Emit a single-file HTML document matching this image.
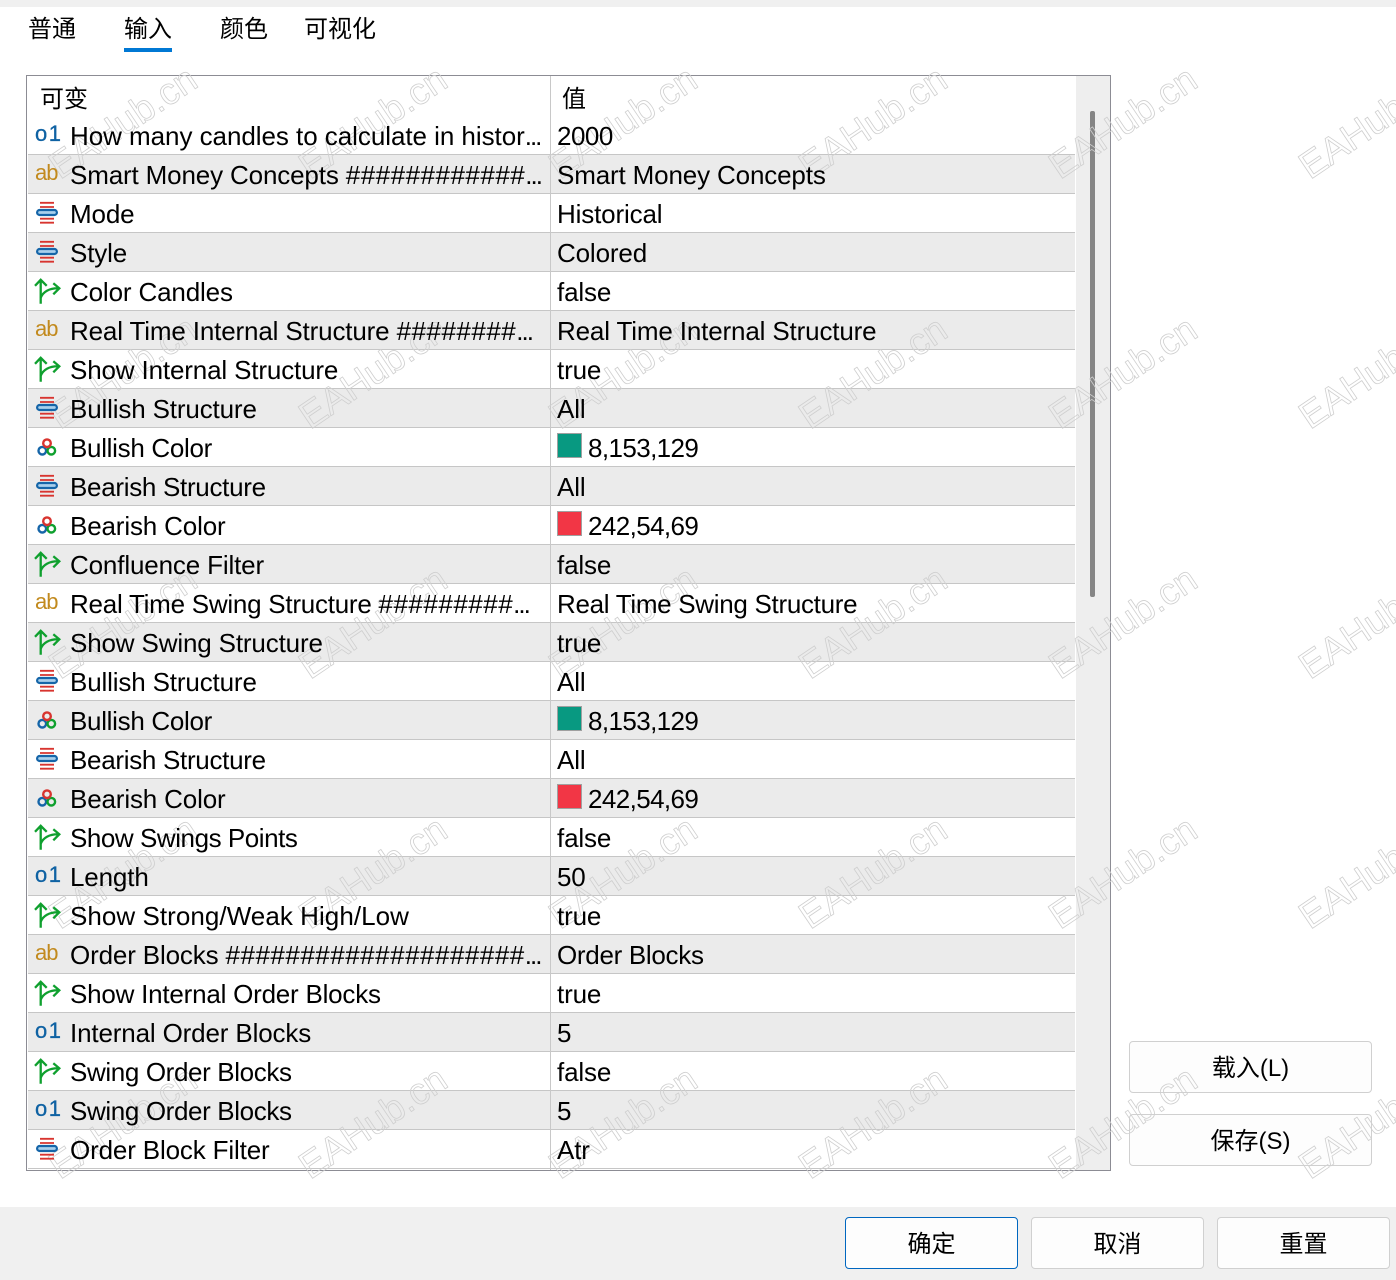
<!DOCTYPE html>
<html lang="zh"><head><meta charset="utf-8"><title>输入</title>
<style>
*{box-sizing:border-box}
html,body{margin:0;padding:0;width:1396px;height:1280px;overflow:hidden;background:#fff}
body{position:relative;font-family:"Liberation Sans","Noto Sans CJK SC",sans-serif;color:#000}
.abs{position:absolute}
.top{left:0;top:0;width:1396px;height:7px;background:#f0f0f0}
.bar{left:0;top:1207px;width:1396px;height:73px;background:#f0f0f0}
.tab{position:absolute;top:12px;font-size:24px;line-height:36px;white-space:nowrap}
.ul{left:124px;top:48px;width:48px;height:4px;background:#0078d4}
.box{left:26px;top:75px;width:1085px;height:1096px;border:1px solid #8c8c94;background:#fff;overflow:hidden}
.track{position:absolute;left:1049px;top:0;width:34px;height:1094px;background:#eee}
.thumb{position:absolute;left:1063px;top:35px;width:5px;height:486px;background:#858585;border-radius:2px}
.hd{position:absolute;top:4px;font-size:24px;line-height:40px}
.div{position:absolute;left:523px;top:0;width:1px;height:1094px;background:#c8c8c8;z-index:2}
.rows{position:absolute;left:1px;top:40px;width:1047px}
.r{position:relative;height:39px;border-bottom:1px solid #c6c6c6;font-size:26px;line-height:38px;white-space:nowrap}
.s{background:#ebebeb}
.n{position:absolute;left:42px;top:1px;letter-spacing:-.15px;z-index:6}
.v{position:absolute;left:529px;top:1px;letter-spacing:-.15px;z-index:6}
.v2{left:560px;letter-spacing:-.6px}
.d{letter-spacing:-2px}
.h{letter-spacing:.5px}
.i{position:absolute;left:6px;top:6px;width:28px;height:28px;z-index:6}
.t{position:absolute;left:7px;top:-1px;font-size:22px;line-height:38px;width:30px;z-index:6}
.o{color:#0f62a3;letter-spacing:1.5px;-webkit-text-stroke:.3px #0f62a3}
.a{color:#c28a1e;letter-spacing:-1px}
.sw{position:absolute;left:529px;top:5px;width:25px;height:25px;border:1px solid #a0a0a0;z-index:6}
.btn{position:absolute;height:52px;background:#fdfdfd;border:1px solid #d0d0d0;border-radius:4px;font-size:24px;line-height:53px;text-align:center}
.wm{position:absolute;left:0;top:0;z-index:5;pointer-events:none}
</style></head><body>
<div class="abs top"></div>
<div class="abs bar"></div>
<div class="tab" style="left:28px">普通</div>
<div class="tab" style="left:124px">输入</div>
<div class="tab" style="left:220px">颜色</div>
<div class="tab" style="left:304px">可视化</div>
<div class="abs ul"></div>
<svg width="0" height="0" style="position:absolute"><defs>
<g id="e"><path d="M6 2.8h14M6 7h14M6 18.7h14M6 22.7h14" stroke="#d8342f" stroke-width="1.8" fill="none"/><rect x="3.1" y="10" width="19.8" height="5" rx="2.5" fill="#a9d0ec" stroke="#1565a8" stroke-width="2.2"/></g>
<g id="b" fill="none" stroke="#0fa02e" stroke-width="2.3"><path d="M6.7 25.7V2M1 7.8l5.7-6 6 6"/><path d="M6.7 19.7C9 14 15 10 25 10.3M19.3 5.3l6 5-6 6"/></g>
<g id="c" fill="none" stroke-width="2.4"><circle cx="8.3" cy="16.7" r="3.8" stroke="#1565a8"/><circle cx="17.3" cy="16.7" r="3.8" stroke="#0fa02e"/><circle cx="13" cy="9.2" r="3.8" stroke="#d8342f"/></g>
</defs></svg>
<div class="abs box">
<div class="hd" style="left:13px">可变</div>
<div class="hd" style="left:535px">值</div>
<div class="rows">
<div class="r"><span class="t o">o1</span><span class="n" style="letter-spacing:-.05px">How many candles to calculate in histor<span class="d">...</span></span><span class="v" style="letter-spacing:-.5px">2000</span></div>
<div class="r s"><span class="t a">ab</span><span class="n">Smart Money Concepts <span class="h">############</span><span class="d">...</span></span><span class="v">Smart Money Concepts</span></div>
<div class="r"><svg class="i"><use href="#e"/></svg><span class="n">Mode</span><span class="v">Historical</span></div>
<div class="r s"><svg class="i"><use href="#e"/></svg><span class="n">Style</span><span class="v">Colored</span></div>
<div class="r"><svg class="i"><use href="#b"/></svg><span class="n">Color Candles</span><span class="v">false</span></div>
<div class="r s"><span class="t a">ab</span><span class="n">Real Time Internal Structure <span class="h">########</span><span class="d">...</span></span><span class="v">Real Time Internal Structure</span></div>
<div class="r"><svg class="i"><use href="#b"/></svg><span class="n">Show Internal Structure</span><span class="v">true</span></div>
<div class="r s"><svg class="i"><use href="#e"/></svg><span class="n">Bullish Structure</span><span class="v">All</span></div>
<div class="r"><svg class="i"><use href="#c"/></svg><span class="n" style="letter-spacing:-.3px">Bullish Color</span><span class="sw" style="background:#089981"></span><span class="v v2">8,153,129</span></div>
<div class="r s"><svg class="i"><use href="#e"/></svg><span class="n" style="letter-spacing:-.3px">Bearish Structure</span><span class="v">All</span></div>
<div class="r"><svg class="i"><use href="#c"/></svg><span class="n">Bearish Color</span><span class="sw" style="background:#f23645"></span><span class="v v2">242,54,69</span></div>
<div class="r s"><svg class="i"><use href="#b"/></svg><span class="n">Confluence Filter</span><span class="v">false</span></div>
<div class="r"><span class="t a">ab</span><span class="n" style="letter-spacing:-.25px">Real Time Swing Structure <span class="h">#########</span><span class="d">...</span></span><span class="v" style="letter-spacing:-.3px">Real Time Swing Structure</span></div>
<div class="r s"><svg class="i"><use href="#b"/></svg><span class="n">Show Swing Structure</span><span class="v">true</span></div>
<div class="r"><svg class="i"><use href="#e"/></svg><span class="n">Bullish Structure</span><span class="v">All</span></div>
<div class="r s"><svg class="i"><use href="#c"/></svg><span class="n" style="letter-spacing:-.3px">Bullish Color</span><span class="sw" style="background:#089981"></span><span class="v v2">8,153,129</span></div>
<div class="r"><svg class="i"><use href="#e"/></svg><span class="n" style="letter-spacing:-.3px">Bearish Structure</span><span class="v">All</span></div>
<div class="r s"><svg class="i"><use href="#c"/></svg><span class="n">Bearish Color</span><span class="sw" style="background:#f23645"></span><span class="v v2">242,54,69</span></div>
<div class="r"><svg class="i"><use href="#b"/></svg><span class="n" style="letter-spacing:-.45px">Show Swings Points</span><span class="v">false</span></div>
<div class="r s"><span class="t o">o1</span><span class="n">Length</span><span class="v">50</span></div>
<div class="r"><svg class="i"><use href="#b"/></svg><span class="n" style="letter-spacing:.05px">Show Strong/Weak High/Low</span><span class="v">true</span></div>
<div class="r s"><span class="t a">ab</span><span class="n">Order Blocks <span class="h">####################</span><span class="d">...</span></span><span class="v" style="letter-spacing:-.3px">Order Blocks</span></div>
<div class="r"><svg class="i"><use href="#b"/></svg><span class="n" style="letter-spacing:-.22px">Show Internal Order Blocks</span><span class="v">true</span></div>
<div class="r s"><span class="t o">o1</span><span class="n">Internal Order Blocks</span><span class="v">5</span></div>
<div class="r"><svg class="i"><use href="#b"/></svg><span class="n" style="letter-spacing:-.37px">Swing Order Blocks</span><span class="v">false</span></div>
<div class="r s"><span class="t o">o1</span><span class="n" style="letter-spacing:-.37px">Swing Order Blocks</span><span class="v">5</span></div>
<div class="r"><svg class="i"><use href="#e"/></svg><span class="n">Order Block Filter</span><span class="v">Atr</span></div>
</div>
<div class="div"></div>
<div class="track"></div><div class="thumb"></div>
</div>
<div class="btn" style="left:1129px;top:1041px;width:243px">载入(L)</div>
<div class="btn" style="left:1129px;top:1114px;width:243px">保存(S)</div>
<div class="btn" style="left:845px;top:1217px;width:173px;border-color:#0067c0">确定</div>
<div class="btn" style="left:1031px;top:1217px;width:173px">取消</div>
<div class="btn" style="left:1217px;top:1217px;width:173px">重置</div>
<svg class="wm" width="1396" height="1280" font-family="Liberation Sans" font-size="37.5" fill="none" stroke="#cfcfcf" stroke-width=".8">
<text transform="translate(60,180) rotate(-34)">EAHub.cn</text>
<text transform="translate(310,180) rotate(-34)">EAHub.cn</text>
<text transform="translate(560,180) rotate(-34)">EAHub.cn</text>
<text transform="translate(810,180) rotate(-34)">EAHub.cn</text>
<text transform="translate(1060,180) rotate(-34)">EAHub.cn</text>
<text transform="translate(1310,180) rotate(-34)">EAHub.cn</text>
<text transform="translate(60,430) rotate(-34)">EAHub.cn</text>
<text transform="translate(310,430) rotate(-34)">EAHub.cn</text>
<text transform="translate(560,430) rotate(-34)">EAHub.cn</text>
<text transform="translate(810,430) rotate(-34)">EAHub.cn</text>
<text transform="translate(1060,430) rotate(-34)">EAHub.cn</text>
<text transform="translate(1310,430) rotate(-34)">EAHub.cn</text>
<text transform="translate(60,680) rotate(-34)">EAHub.cn</text>
<text transform="translate(310,680) rotate(-34)">EAHub.cn</text>
<text transform="translate(560,680) rotate(-34)">EAHub.cn</text>
<text transform="translate(810,680) rotate(-34)">EAHub.cn</text>
<text transform="translate(1060,680) rotate(-34)">EAHub.cn</text>
<text transform="translate(1310,680) rotate(-34)">EAHub.cn</text>
<text transform="translate(60,930) rotate(-34)">EAHub.cn</text>
<text transform="translate(310,930) rotate(-34)">EAHub.cn</text>
<text transform="translate(560,930) rotate(-34)">EAHub.cn</text>
<text transform="translate(810,930) rotate(-34)">EAHub.cn</text>
<text transform="translate(1060,930) rotate(-34)">EAHub.cn</text>
<text transform="translate(1310,930) rotate(-34)">EAHub.cn</text>
<text transform="translate(60,1180) rotate(-34)">EAHub.cn</text>
<text transform="translate(310,1180) rotate(-34)">EAHub.cn</text>
<text transform="translate(560,1180) rotate(-34)">EAHub.cn</text>
<text transform="translate(810,1180) rotate(-34)">EAHub.cn</text>
<text transform="translate(1060,1180) rotate(-34)">EAHub.cn</text>
<text transform="translate(1310,1180) rotate(-34)">EAHub.cn</text>
</svg>
</body></html>
